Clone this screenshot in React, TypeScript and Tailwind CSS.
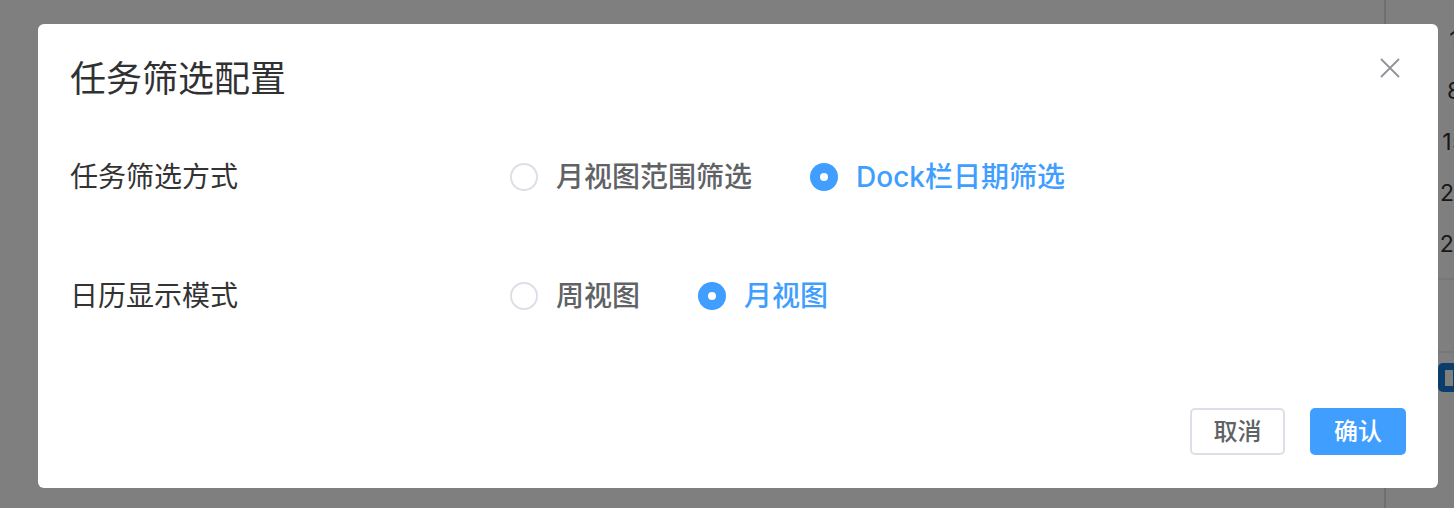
import { useState } from 'react';

const font = { fontFamily: 'Inter, "Noto Sans CJK SC", sans-serif' };

interface Option {
  value: string;
  label: string;
}

const filterOptions: Option[] = [
  { value: 'month', label: '月视图范围筛选' },
  { value: 'dock', label: 'Dock栏日期筛选' },
];

const viewOptions: Option[] = [
  { value: 'week', label: '周视图' },
  { value: 'month', label: '月视图' },
];

const RadioGroup = ({
  options,
  value,
  onChange,
}: {
  options: Option[];
  value: string;
  onChange: (v: string) => void;
}) => (
  <div className="flex items-center gap-[58px]">
    {options.map((opt) => {
      const checked = opt.value === value;
      return (
        <label
          key={opt.value}
          onClick={() => onChange(opt.value)}
          className="flex items-center gap-[18px] cursor-pointer"
        >
          {checked ? (
            <span className="w-[28px] h-[28px] rounded-full bg-[#409eff] flex items-center justify-center">
              <span className="w-[8px] h-[8px] rounded-full bg-white" />
            </span>
          ) : (
            <span className="w-[28px] h-[28px] rounded-full border-2 border-[#dcdfe6] bg-white" />
          )}
          <span
            className={`text-[28px] leading-[40px] font-medium ${checked ? 'text-[#409eff]' : 'text-[#606266]'}`}
          >
            {opt.label}
          </span>
        </label>
      );
    })}
  </div>
);

const App = () => {
  const [filterMode, setFilterMode] = useState('dock');
  const [viewMode, setViewMode] = useState('month');

  return (
    <div className="relative w-full h-[508px] overflow-hidden bg-white" style={font}>
      {/* page behind the dialog: calendar edge on the right */}
      <div className="flex h-full">
        <div className="w-[1384px] shrink-0" />
        <div className="w-[134px] shrink-0 border-l-2 border-[#dcdfe6] flex flex-col pt-[15px]">
          {['1', '8', '15', '22', '29'].map((d) => (
            <div key={d} className="h-[51px] flex items-center justify-center pl-[4px] text-[23px] text-[#303133]">
              {d}
            </div>
          ))}
          <div className="mt-[8px] border-t-2 border-[#ebeef5] h-[73px]" />
          <div className="border-t-2 border-[#ebeef5] pt-[10px] pl-[52px]">
            <div className="h-[29px] w-[60px] rounded-[5px] bg-[#167ad6] flex items-center pl-[7px]">
              <span className="w-[8px] h-[16px] bg-white" />
            </div>
          </div>
        </div>
      </div>

      {/* dialog overlay */}
      <div className="absolute inset-0 bg-black/50 pt-[24px] px-[38px]">
        <div className="w-[1400px] h-[464px] bg-white rounded-[6px] flex flex-col px-[32px] pb-[33px]">
          <div className="flex items-start justify-between pt-[32px]">
            <h2 className="text-[36px] leading-[46px] text-[#303133]">任务筛选配置</h2>
            <button className="mt-[1px] mr-[5px] w-[22px] h-[22px] text-[#909399] cursor-pointer">
              <svg viewBox="0 0 22 22" width="22" height="22" fill="none" stroke="currentColor" strokeWidth="1.8">
                <path d="M2 2 L20 20 M20 2 L2 20" />
              </svg>
            </button>
          </div>

          <div className="flex flex-col gap-[39px] mt-[35px]">
            <div className="flex items-center h-[80px]">
              <div className="w-[440px] text-[28px] text-[#333]">任务筛选方式</div>
              <RadioGroup options={filterOptions} value={filterMode} onChange={setFilterMode} />
            </div>
            <div className="flex items-center h-[80px]">
              <div className="w-[440px] text-[28px] text-[#333]">日历显示模式</div>
              <RadioGroup options={viewOptions} value={viewMode} onChange={setViewMode} />
            </div>
          </div>

          <div className="mt-auto flex justify-end gap-[25px]">
            <button className="w-[95px] h-[47px] rounded-[5px] border-2 border-[#dcdfe6] bg-white text-[24px] font-medium text-[#606266] cursor-pointer">
              取消
            </button>
            <button className="w-[96px] h-[47px] rounded-[5px] bg-[#409eff] text-[24px] font-medium text-white cursor-pointer">
              确认
            </button>
          </div>
        </div>
      </div>
    </div>
  );
};

export default App;
